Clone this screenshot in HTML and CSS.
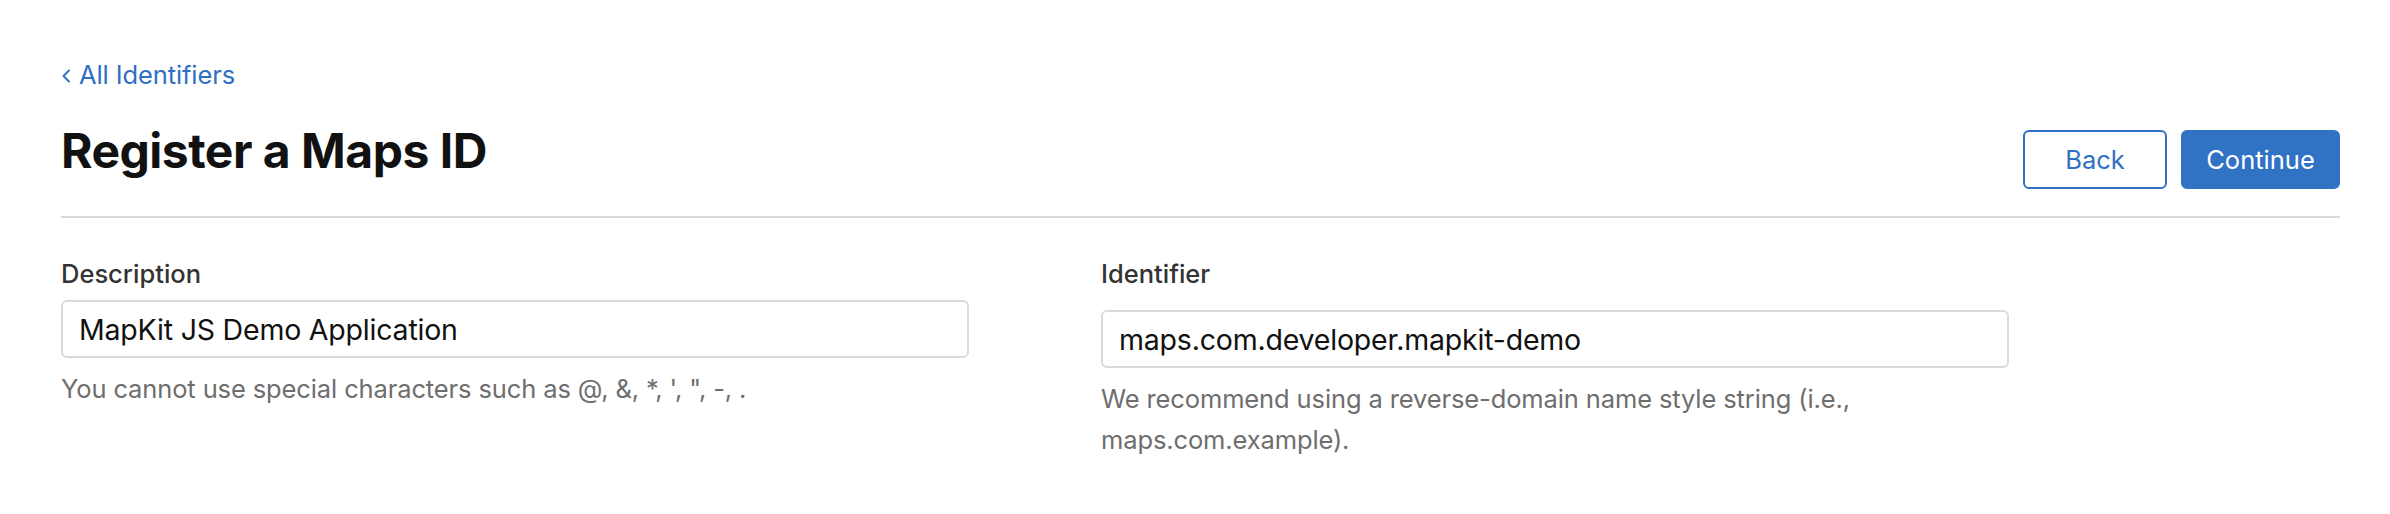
FILE: index.html
```html
<!DOCTYPE html>
<html lang="en">
<head>
<meta charset="utf-8">
<title>Register a Maps ID</title>
<link rel="stylesheet" href="styles.css">
</head>
<body>
<main class="page">
  <a class="crumb" href="#">
    <svg class="crumb-icon" width="10" height="14" viewBox="0 0 10 14" aria-hidden="true"><polyline points="8,1.5 2.5,7 8,12.5" fill="none" stroke="currentColor" stroke-width="1.9" stroke-linecap="round" stroke-linejoin="round"/></svg>
    <span>All Identifiers</span>
  </a>
  <header class="header">
    <h1 class="title">Register a Maps ID</h1>
    <div class="actions">
      <button class="btn btn-secondary" type="button">Back</button>
      <button class="btn btn-primary" type="button">Continue</button>
    </div>
  </header>
  <section class="fields">
    <div class="field">
      <label class="label" for="desc">Description</label>
      <input class="input" id="desc" type="text" value="MapKit JS Demo Application">
      <p class="help">You cannot use special characters such as @, &amp;, *, ', ", -, .</p>
    </div>
    <div class="field field-offset">
      <label class="label" for="ident">Identifier</label>
      <input class="input" id="ident" type="text" value="maps.com.developer.mapkit-demo">
      <p class="help">We recommend using a reverse-domain name style string (i.e., maps.com.example).</p>
    </div>
  </section>
</main>
</body>
</html>
```
FILE: styles.css
```css
* { box-sizing: border-box; }
html, body { margin: 0; padding: 0; background: #fff; }
body {
  font-family: Inter, "Noto Sans", "Liberation Sans", sans-serif;
  color: #1d1d1f;
  width: 2390px;
  height: 514px;
  overflow: hidden;
}
.page {
  padding: 60px 50px 0 61px;
}
.crumb {
  display: inline-flex;
  align-items: center;
  gap: 8px;
  color: #2f70c3;
  text-decoration: none;
  font-size: 25.5px;
  line-height: 30px;
  height: 30px;
  letter-spacing: -0.1px;
}
.crumb-icon { display: block; margin-top: 2px; }
.header {
  display: flex;
  justify-content: space-between;
  align-items: flex-start;
  margin-top: 34px;
  padding-bottom: 27px;
  border-bottom: 2px solid #dadada;
}
.title {
  margin: 0;
  font-size: 48px;
  line-height: 54px;
  font-weight: 700;
  color: #111;
  letter-spacing: -0.5px;
}
.actions {
  display: flex;
  gap: 14px;
  margin-top: 6px;
}
.btn {
  font-family: inherit;
  font-size: 25.5px;
  height: 59px;
  min-width: 144px;
  padding: 0 20px;
  border-radius: 6px;
  cursor: pointer;
}
.btn-secondary {
  background: #fff;
  color: #2f70c3;
  border: 2px solid #2f70c3;
}
.btn-primary {
  width: 159px;
  background: #3072c4;
  color: #fff;
  border: 2px solid #3072c4;
}
.fields {
  display: grid;
  grid-template-columns: 1040px 908px;
  padding-top: 41px;
}
.field { display: flex; flex-direction: column; align-items: flex-start; }
.label {
  font-size: 25.5px;
  line-height: 30px;
  font-weight: 500;
  color: #333;
}
.input {
  margin-top: 11px;
  width: 908px;
  height: 58px;
  padding: 0 16px;
  border: 2px solid #dadada;
  border-radius: 6px;
  font-family: inherit;
  font-size: 28.5px;
  letter-spacing: -0.2px;
  color: #111;
  background: #fff;
  outline: none;
}
.field-offset .input { margin-top: 21px; }
.help {
  margin: 10px 0 0;
  width: 908px;
  font-size: 25.5px;
  line-height: 41px;
  letter-spacing: -0.12px;
  color: #6e6e6e;
}
```
